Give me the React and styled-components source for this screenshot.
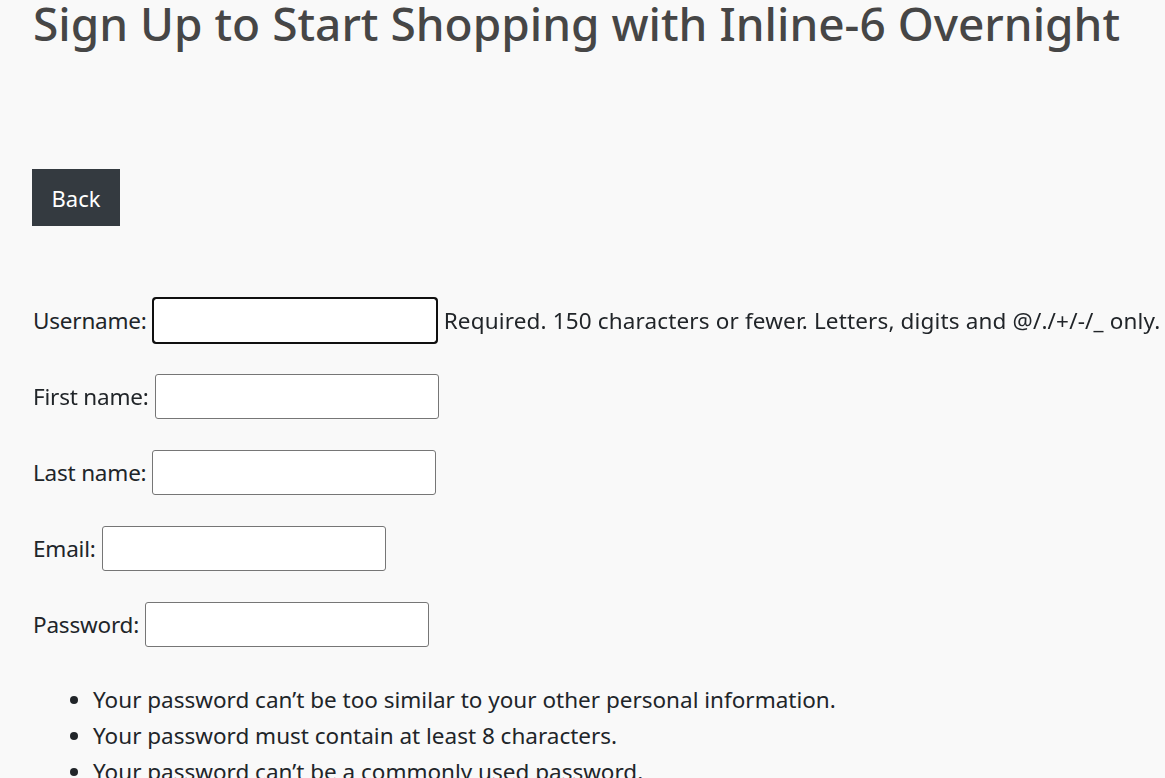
import React from 'react';
import styled, { createGlobalStyle } from 'styled-components';

const GlobalStyle = createGlobalStyle`
  html, body {
    margin: 0;
    padding: 0;
    background: #f9f9f9;
  }
  body {
    font-family: "Noto Sans", "Open Sans", sans-serif;
    color: #212529;
  }
`;

const Page = styled.main`
  padding: 0 33px;
  overflow: hidden;
  height: 778px;
`;

const Title = styled.h1`
  margin: 0;
  font-size: 46px;
  font-weight: 500;
  line-height: 46px;
  color: #464646;
  white-space: nowrap;
`;

const BackButton = styled.button`
  margin-top: 123px;
  display: block;
  width: 88px;
  height: 57px;
  margin-left: -1px;
  border: none;
  border-radius: 0;
  background: #343a40;
  color: #ffffff;
  font-family: inherit;
  font-size: 22px;
  cursor: pointer;
`;

const Form = styled.form`
  margin-top: 72px;
  display: flex;
  flex-direction: column;
  gap: 31px;
`;

const Row = styled.div`
  display: flex;
  align-items: center;
  gap: 6px;
  font-size: 22.5px;
  white-space: nowrap;

  & > * {
    flex-shrink: 0;
  }
`;

const Label = styled.label`
  line-height: 30px;
  letter-spacing: -0.2px;
`;

const Input = styled.input`
  box-sizing: border-box;
  width: 284px;
  height: 45px;
  border: 1px solid #767676;
  border-radius: 3px;
  background: #ffffff;
  padding: 2px 6px;
  font-size: 18px;
  outline: ${p => (p.$focused ? '2px solid #101010' : 'none')};
  outline-offset: -1px;
  ${p => p.$focused && 'border-color: #101010;'}
`;

const HelpText = styled.span`
  margin-left: 1px;
  letter-spacing: 0.15px;
`;

const Rules = styled.ul`
  margin: 35px 0 0;
  padding-left: 60px;
  font-size: 22.5px;
  line-height: 36px;
  white-space: nowrap;
`;

export default function App() {
  return (
    <>
      <GlobalStyle />
      <Page>
        <Title>Sign Up to Start Shopping with Inline-6 Overnight</Title>
        <BackButton type="button">Back</BackButton>
        <Form onSubmit={e => e.preventDefault()}>
          <Row>
            <Label htmlFor="id_username">Username:</Label>
            <Input id="id_username" type="text" $focused autoFocus />
            <HelpText>Required. 150 characters or fewer. Letters, digits and @/./+/-/_ only.</HelpText>
          </Row>
          <Row>
            <Label htmlFor="id_first_name">First name:</Label>
            <Input id="id_first_name" type="text" />
          </Row>
          <Row>
            <Label htmlFor="id_last_name">Last name:</Label>
            <Input id="id_last_name" type="text" />
          </Row>
          <Row>
            <Label htmlFor="id_email">Email:</Label>
            <Input id="id_email" type="email" />
          </Row>
          <Row>
            <Label htmlFor="id_password">Password:</Label>
            <Input id="id_password" type="password" />
          </Row>
        </Form>
        <Rules>
          <li>Your password can’t be too similar to your other personal information.</li>
          <li>Your password must contain at least 8 characters.</li>
          <li>Your password can’t be a commonly used password.</li>
        </Rules>
      </Page>
    </>
  );
}
